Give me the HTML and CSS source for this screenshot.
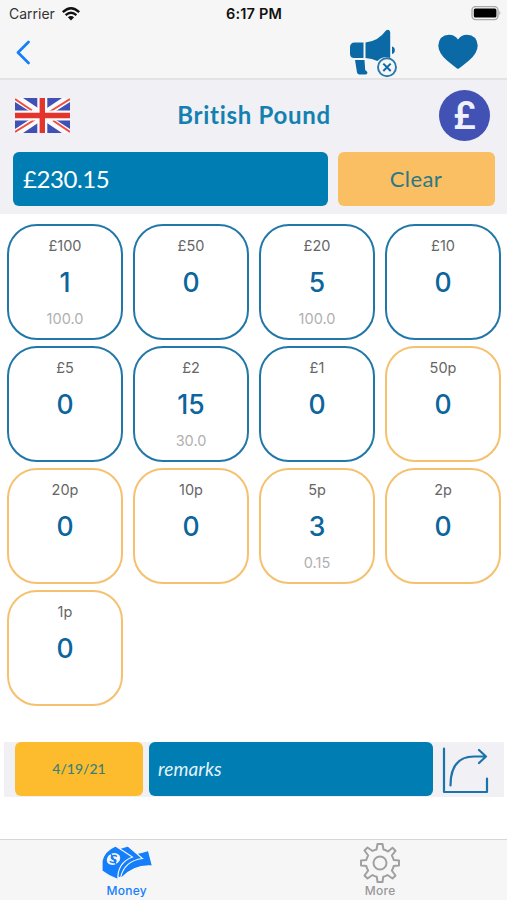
FILE: index.html
```html
<!DOCTYPE html>
<html lang="en">
<head>
    <meta charset="UTF-8">
    <meta name="viewport" content="width=device-width, initial-scale=1.0">
    <title>British Pound</title>
    <link rel="stylesheet" href="styles.css">
</head>
<body>
    <div class="status-bar">
        <div class="carrier">
            <span>Carrier</span>
            <svg width="18" height="14" viewBox="0 0 18 14">
                <path d="M.8 5.200Q9-2.600 17.200 5.200M3.600 8.100Q9 3.300 14.400 8.100" fill="none" stroke="#111" stroke-width="2.300"/>
                <path d="M5.900 10.200Q9 7.800 12.100 10.200L9 13.400Z" fill="#111"/>
            </svg>
        </div>
        <div class="time">6:17 PM</div>
        <svg class="battery" width="31" height="15" viewBox="0 0 31 15">
            <rect x="1" y=".6" width="26" height="13" rx="3.500" fill="#f7f6f7" stroke="#aaa" stroke-width="1.400"/>
            <rect x="2.800" y="2.600" width="22.600" height="9" rx="1.500" fill="#000"/>
            <path d="M28.400 4.800Q30.400 7 28.400 9.200Z" fill="#aaa"/>
        </svg>
    </div>

    <div class="nav-bar">
        <svg class="back" width="16" height="25" viewBox="0 0 16 25">
            <path d="M14.500 2L4 12.500L14.500 23" fill="none" stroke="#147efb" stroke-width="2.700" stroke-linecap="round" stroke-linejoin="round"/>
        </svg>
        <svg class="megaphone" width="50" height="50" viewBox="0 0 50 50">
            <g fill="#0b6aa5">
                <path d="M15.500 14.500V30H6Q2.300 30 2 26V19Q2.300 14.500 6.500 14.500Z"/>
                <path d="M17.500 14.400Q30 13.500 38 2.500Q41 .3 42.200 4V30Q34 27.500 29.500 33Q24 30.500 17.500 30Z"/>
                <path d="M44 18.500Q46.800 19 46.800 22.300T44 26Z"/>
                <path d="M7 32H16.500L17.200 42Q19.500 43.500 19.500 45Q19 46.500 17 46.500H11.500Q9.500 46.500 9 44.500Z"/>
            </g>
            <circle cx="39" cy="39.300" r="9" fill="#f7f6f7" stroke="#2a79ad" stroke-width="1.900"/>
            <path d="M35.300 35.600L42.700 43M42.700 35.600L35.300 43" stroke="#0b6aa5" stroke-width="2"/>
        </svg>
        <svg class="heart" width="40" height="36" viewBox="0 0 40 36">
            <path d="M20 35Q17.500 33.500 9 26.500Q.3 19 .3 11.500Q1.200 1 11 .7Q17 .7 20 5.400Q23 .7 29 .7Q38.800 1 39.700 11.500Q39.700 19 31 26.500Q22.500 33.500 20 35Z" fill="#0b6aa5"/>
        </svg>
    </div>

    <div class="header">
        <div class="currency">
            <svg class="flag" width="55" height="35" viewBox="0 0 55 35">
                <rect width="55" height="35" fill="#fafafa"/>
                <path d="M8 0H23V10ZM0 4V13H14ZM47 0H32V10ZM55 4V13H41ZM8 35H23V25ZM0 31V22H14ZM47 35H32V25ZM55 31V22H41Z" fill="#4050b5"/>
                <path d="M0 1L17 12.500M55 1L35 13.500M0 34L20 21.500M55 34L38 22.500" stroke="#ef4b42" stroke-width="2"/>
                <path d="M0 17.500H55M27.300 0V35" stroke="#fafafa" stroke-width="10"/>
                <path d="M0 17.500H55M27.300 0V35" stroke="#e5342e" stroke-width="5.400"/>
            </svg>
            <h1 class="title">British Pound</h1>
            <div class="symbol">£</div>
        </div>
        <div class="total-row">
            <div class="total">£230.15</div>
            <button class="clear">Clear</button>
        </div>
    </div>

    <div class="grid">
        <div class="card">
            <div class="name">£100</div>
            <div class="count">1</div>
            <div class="sum">100.0</div>
        </div>
        <div class="card">
            <div class="name">£50</div>
            <div class="count">0</div>
        </div>
        <div class="card">
            <div class="name">£20</div>
            <div class="count">5</div>
            <div class="sum">100.0</div>
        </div>
        <div class="card">
            <div class="name">£10</div>
            <div class="count">0</div>
        </div>
        <div class="card">
            <div class="name">£5</div>
            <div class="count">0</div>
        </div>
        <div class="card">
            <div class="name">£2</div>
            <div class="count">15</div>
            <div class="sum">30.0</div>
        </div>
        <div class="card">
            <div class="name">£1</div>
            <div class="count">0</div>
        </div>
        <div class="card coin">
            <div class="name">50p</div>
            <div class="count">0</div>
        </div>
        <div class="card coin">
            <div class="name">20p</div>
            <div class="count">0</div>
        </div>
        <div class="card coin">
            <div class="name">10p</div>
            <div class="count">0</div>
        </div>
        <div class="card coin">
            <div class="name">5p</div>
            <div class="count">3</div>
            <div class="sum">0.15</div>
        </div>
        <div class="card coin">
            <div class="name">2p</div>
            <div class="count">0</div>
        </div>
        <div class="card coin">
            <div class="name">1p</div>
            <div class="count">0</div>
        </div>
    </div>

    <div class="note-row">
        <div class="date">4/19/21</div>
        <div class="remarks">remarks</div>
        <svg class="share" width="48" height="48" viewBox="0 0 48 48">
            <g fill="none" stroke="#1b73aa" stroke-width="2.200" stroke-linecap="round" stroke-linejoin="round">
                <path d="M2 1.500V45H45V31.500"/>
                <path d="M8.500 38.500C8.500 18 17 9.500 32 9.500H44M37 3L44 9.500L37 16"/>
            </g>
        </svg>
    </div>

    <div class="tab-bar">
        <div class="tab active">
            <svg width="58" height="42" viewBox="0 0 58 42">
                <g fill="#147efb" stroke="#f7f6f7" stroke-width="1.200">
                    <path d="M36 12Q43 11 50.500 8.500L54.500 24Q36 22.500 23.500 36L21 34Z"/>
                    <path d="M20 7L30 4L44.500 16.500Q26 19 22.500 36L18 34Z"/>
                    <path d="M4 19Q6 9 17.500 4L34.500 15Q19 21 20 37.500Q11 34.500 4 29Z"/>
                </g>
                <ellipse cx="15.500" cy="17" rx="7" ry="5.600" fill="#f7f6f7" transform="rotate(-28 15.500 17)"/>
                <path d="M19 14.500C16.500 12.500 12.500 14 13.500 16.200S18 16.500 18 18.700S13.500 21 11.800 19.200M13 12L18 22" fill="none" stroke="#147efb" stroke-width="1.400"/>
            </svg>
            <span>Money</span>
        </div>
        <div class="tab">
            <svg width="42" height="42" viewBox="0 0 42 42">
                <g fill="none" stroke="#a0a0a2" stroke-width="2" stroke-linejoin="round">
                    <path d="M18.500 2H23.500L24.500 7.500Q26.800 8 29 9.500L33.500 5.800L36.500 8.800L32.800 13.500Q34.200 15.500 34.700 18L40 18.500V23.500L34.700 24Q34.200 26.500 32.800 28.500L36.500 33.500L33.500 36.500L28.500 33Q26.500 34.300 24.200 34.800L23.500 40H18.500L17.800 34.800Q15.500 34.300 13.500 33L8.500 36.500L5.500 33.500L9.200 28.500Q7.800 26.500 7.300 24L2 23.500V18.500L7.300 18Q7.800 15.500 9.200 13.500L5.500 8.500L8.500 5.500L13.500 9Q15.200 8 17.500 7.500Z"/>
                    <circle cx="21" cy="21" r="6.500"/>
                </g>
            </svg>
            <span>More</span>
        </div>
    </div>
</body>
</html>
```

FILE: styles.css
```css
* {
    box-sizing: border-box;
}
body {
    margin: 0;
    height: 900px;
    display: flex;
    flex-direction: column;
    font-family: Inter, sans-serif;
    background-color: white;
    overflow: hidden;
}
.status-bar {
    display: grid;
    grid-template-columns: 1fr auto 1fr;
    align-items: center;
    height: 27px;
    padding: 0 5px 0 9px;
    background-color: #f7f6f7;
    font-size: 14px;
    color: #333;
}
.carrier {
    display: flex;
    align-items: center;
    gap: 7px;
}
.time {
    margin-right: 3px;
    font-weight: 600;
    font-size: 14.5px;
    letter-spacing: 0.2px;
    color: #111;
}
.battery {
    justify-self: end;
}
.nav-bar {
    display: flex;
    align-items: center;
    height: 53px;
    padding: 0 29px 1px 14px;
    background-color: #f7f6f7;
    border-bottom: 2px solid #e3e2e5;
}
.megaphone {
    margin-left: auto;
    margin-right: 40px;
    margin-top: 1px;
}
.header {
    height: 134px;
    padding: 10px 12px 0 13px;
    background-color: #f0f0f5;
}
.currency {
    display: flex;
    align-items: center;
    justify-content: space-between;
    height: 51px;
    padding: 0 5px 0 2px;
}
.title {
    margin: 0 1px 2px 0;
    font-family: Lato, sans-serif;
    font-size: 24px;
    font-weight: 700;
    letter-spacing: 0.7px;
    color: #1381b0;
}
.symbol {
    width: 51px;
    height: 51px;
    border-radius: 50%;
    background-color: #4151b4;
    color: #f0f0fa;
    font-family: Roboto, sans-serif;
    font-size: 39px;
    font-weight: 500;
    line-height: 53px;
    text-align: center;
}
.total-row {
    display: flex;
    gap: 10px;
    margin-top: 11px;
}
.total {
    flex: 1;
    height: 54px;
    padding-left: 10px;
    border-radius: 6px;
    background-color: #007db2;
    color: white;
    font-family: Lato, sans-serif;
    font-size: 24px;
    line-height: 53px;
    letter-spacing: -0.4px;
}
.clear {
    width: 157px;
    height: 54px;
    padding: 0 1px 2px 0;
    border: 0;
    border-radius: 6px;
    background-color: #f9bf62;
    color: #2c7785;
    font-family: Lato, sans-serif;
    font-size: 22px;
    letter-spacing: 0.4px;
}
.grid {
    display: grid;
    grid-template-columns: repeat(4, 116px);
    grid-auto-rows: 116px;
    gap: 6px 10px;
    padding: 10px 7px 0;
}
.card {
    display: flex;
    flex-direction: column;
    align-items: center;
    padding-top: 11px;
    border: 2px solid #2277a9;
    border-radius: 30px;
}
.coin {
    border-color: #f5c16e;
}
.name {
    height: 18px;
    font-size: 14.5px;
    line-height: 18px;
    color: #666;
}
.count {
    height: 34px;
    margin-top: 10px;
    font-size: 26.5px;
    font-weight: 500;
    line-height: 34px;
    color: #0c659c;
}
.sum {
    margin-top: 11px;
    font-size: 14.5px;
    line-height: 18px;
    color: #b0b0b0;
}
.note-row {
    display: flex;
    align-items: flex-start;
    height: 55px;
    margin: auto 3px 42px 4px;
    padding-left: 11px;
    background-color: #f0f0f5;
}
.date {
    width: 128px;
    height: 54px;
    border-radius: 6px;
    background-color: #fdbc2e;
    color: #38807a;
    font-family: Lato, sans-serif;
    font-size: 14px;
    font-weight: 500;
    line-height: 53px;
    text-align: center;
}
.remarks {
    width: 284px;
    height: 54px;
    margin-left: 6px;
    padding-left: 9px;
    border-radius: 6px;
    background-color: #007db2;
    color: #e3f3fa;
    font-family: Lato, sans-serif;
    font-size: 19px;
    font-style: italic;
    line-height: 53px;
    letter-spacing: 0.1px;
}
.share {
    margin-top: 5px;
    margin-left: 9px;
}
.tab-bar {
    display: flex;
    height: 61px;
    background-color: #f7f6f7;
    border-top: 1px solid #d6d6d8;
}
.tab {
    flex: 1;
    display: flex;
    flex-direction: column;
    align-items: center;
    padding-top: 2px;
    font-size: 12px;
    font-weight: 500;
    line-height: 14px;
    letter-spacing: 0.3px;
    color: #98989a;
}
.active {
    color: #147efb;
}
```
